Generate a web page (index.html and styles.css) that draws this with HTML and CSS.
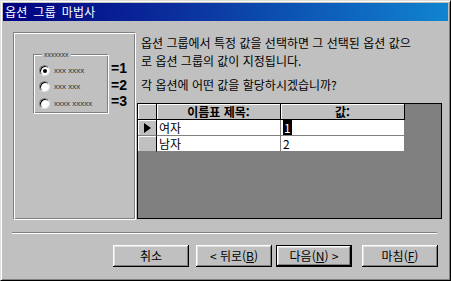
FILE: index.html
```html
<!DOCTYPE html>
<html lang="ko">

<head>
    <meta charset="UTF-8">
    <meta name="viewport" content="width=device-width, initial-scale=1.0">
    <title>옵션 그룹 마법사</title>
    <link rel="stylesheet" href="styles.css">
</head>

<body>
    <div class="window">
        <div class="titlebar">옵션 그룹 마법사</div>

        <div class="content">
            <!-- 미리보기 -->
            <div class="preview">
                <div class="group">
                    <span class="group-caption">xxxxxxx</span>
                    <div class="opt"><span class="radio checked"></span><span class="opt-label">xxx xxxx</span></div>
                    <div class="opt"><span class="radio"></span><span class="opt-label">xxx xxx</span></div>
                    <div class="opt"><span class="radio"></span><span class="opt-label">xxxx xxxxx</span></div>
                </div>
                <div class="values">
                    <span>=1</span>
                    <span>=2</span>
                    <span>=3</span>
                </div>
            </div>

            <div class="main">
                <p class="desc">옵션 그룹에서 특정 값을 선택하면 그 선택된 옵션 값으<br>로 옵션 그룹의 값이 지정됩니다.</p>
                <p class="question">각 옵션에 어떤 값을 할당하시겠습니까?</p>

                <!-- 데이터시트 -->
                <div class="grid">
                    <div class="sheet">
                        <div class="hcell"></div>
                        <div class="hcell">이름표 제목:</div>
                        <div class="hcell">값:</div>

                        <div class="sel"><span class="arrow"></span></div>
                        <div class="cell">여자</div>
                        <div class="cell"><span class="selected">1</span></div>

                        <div class="sel"></div>
                        <div class="cell">남자</div>
                        <div class="cell">2</div>
                    </div>
                </div>
            </div>
        </div>

        <div class="separator"></div>

        <div class="buttons">
            <button class="btn">취소</button>
            <button class="btn">&lt; 뒤로(<u>B</u>)</button>
            <button class="btn default">다음(<u>N</u>) &gt;</button>
            <button class="btn">마침(<u>F</u>)</button>
        </div>
    </div>
</body>

</html>
```

FILE: styles.css
```css
body {
    margin: 0;
    padding: 0;
    overflow: hidden;
    background: #c0c0c0;
    font-family: "Noto Sans CJK KR", "Liberation Sans", sans-serif;
    font-size: 12px;
    color: #000;
}

.window {
    width: 451px;
    height: 281px;
    box-sizing: border-box;
    padding: 2px;
    background: #c0c0c0;
    border: 1px solid;
    border-color: #dfdfdf #000 #000 #dfdfdf;
    box-shadow: inset 1px 1px #fff, inset -1px -1px #808080;
}

.titlebar {
    height: 18px;
    line-height: 18px;
    padding-left: 2px;
    color: #fff;
    word-spacing: 2px;
    letter-spacing: 0.3px;
    background: linear-gradient(90deg, #000080, #0a2a9a 35%, #1084d0);
}

.content {
    display: flex;
    padding: 11px 0 0 10px;
}

/* 미리보기 패널 */
.preview {
    width: 123px;
    height: 188px;
    box-sizing: border-box;
    border: 1px solid;
    border-color: #808080 #fff #fff #808080;
    box-shadow: inset 1px 1px #fff, inset -1px -1px #808080;
    display: flex;
    align-items: flex-start;
    padding: 21px 0 0 19px;
}

.group {
    position: relative;
    width: 76px;
    height: 60px;
    box-sizing: border-box;
    border: 1px solid;
    border-color: #808080 #fff #fff #808080;
    box-shadow: inset 1px 1px #fff, inset -1px -1px #808080;
    padding-top: 7px;
}

.group-caption {
    position: absolute;
    top: -4px;
    left: 8px;
    padding: 0 2px;
    background: #c0c0c0;
    font-family: "Liberation Sans", sans-serif;
    font-size: 7px;
    line-height: 7px;
    color: #333;
}

.opt {
    display: flex;
    align-items: center;
    height: 16.5px;
    padding-left: 5px;
}

.radio {
    width: 11px;
    height: 11px;
    box-sizing: border-box;
    border-radius: 50%;
    background: #fff;
    border: 1px solid;
    border-color: #808080 #dfdfdf #dfdfdf #808080;
    box-shadow: inset 1px 1px #000;
    position: relative;
    flex: none;
}

.radio.checked::after {
    content: "";
    position: absolute;
    left: 3px;
    top: 3px;
    width: 4px;
    height: 4px;
    border-radius: 50%;
    background: #000;
}

.opt-label {
    margin-left: 4px;
    font-family: "Liberation Sans", sans-serif;
    font-size: 8px;
    color: #333;
}

.values {
    display: flex;
    flex-direction: column;
    margin-left: 2px;
    padding-top: 6px;
}

.values span {
    height: 16.5px;
    line-height: 16px;
    font-family: "Liberation Sans", sans-serif;
    font-size: 14px;
    font-weight: bold;
}

/* 오른쪽 영역 */
.main {
    margin-left: 1px;
}

.desc,
.question {
    margin: 0;
    padding-left: 4px;
    line-height: 15px;
    white-space: nowrap;
}

.desc {
    margin-top: 2px;
    line-height: 17.5px;
}

.question {
    margin-top: 8px;
}

.grid {
    margin-top: 11px;
    width: 305px;
    height: 116px;
    box-sizing: border-box;
    border: 1px solid #000;
    background: #808080;
}

.sheet {
    display: grid;
    grid-template-columns: 19px 124px 124px;
    grid-auto-rows: 16px;
    width: 267px;
}

.hcell,
.sel,
.cell {
    box-sizing: border-box;
    border-right: 1px solid #808080;
    border-bottom: 1px solid #808080;
    line-height: 15px;
    overflow: hidden;
    white-space: nowrap;
}

.hcell {
    background: #c0c0c0;
    border-color: #000;
    box-shadow: inset 1px 1px #fff;
    text-align: center;
    font-weight: bold;
}

.sel {
    background: #c0c0c0;
    border-right-color: #000;
    box-shadow: inset 1px 1px #fff;
    display: flex;
    align-items: center;
    justify-content: center;
}

.arrow {
    width: 0;
    height: 0;
    border-left: 7px solid #000;
    border-top: 5px solid transparent;
    border-bottom: 5px solid transparent;
}

.cell {
    background: #fff;
    padding-left: 2px;
}

.selected {
    background: #000;
    color: #fff;
    padding: 0 1px;
}

.separator {
    margin: 12px 0 0 9px;
    width: 425px;
    border-top: 1px solid #808080;
    border-bottom: 1px solid #fff;
}

.buttons {
    display: flex;
    margin-top: 11px;
    padding-left: 110px;
}

.btn {
    width: 76px;
    height: 22px;
    padding: 0;
    margin: 0 7px 0 0;
    font-family: "Noto Sans CJK KR", "Liberation Sans", sans-serif;
    font-size: 12px;
    line-height: 14px;
    color: #000;
    background: #c0c0c0;
    border: none;
    box-shadow: inset -1px -1px #000, inset 1px 1px #fff, inset -2px -2px #808080, inset 2px 2px #dfdfdf;
}

.btn:nth-child(2) {
    margin-right: 4px;
}

.btn.default {
    margin-right: 10px;
    border: 1px solid #000;
}
```
